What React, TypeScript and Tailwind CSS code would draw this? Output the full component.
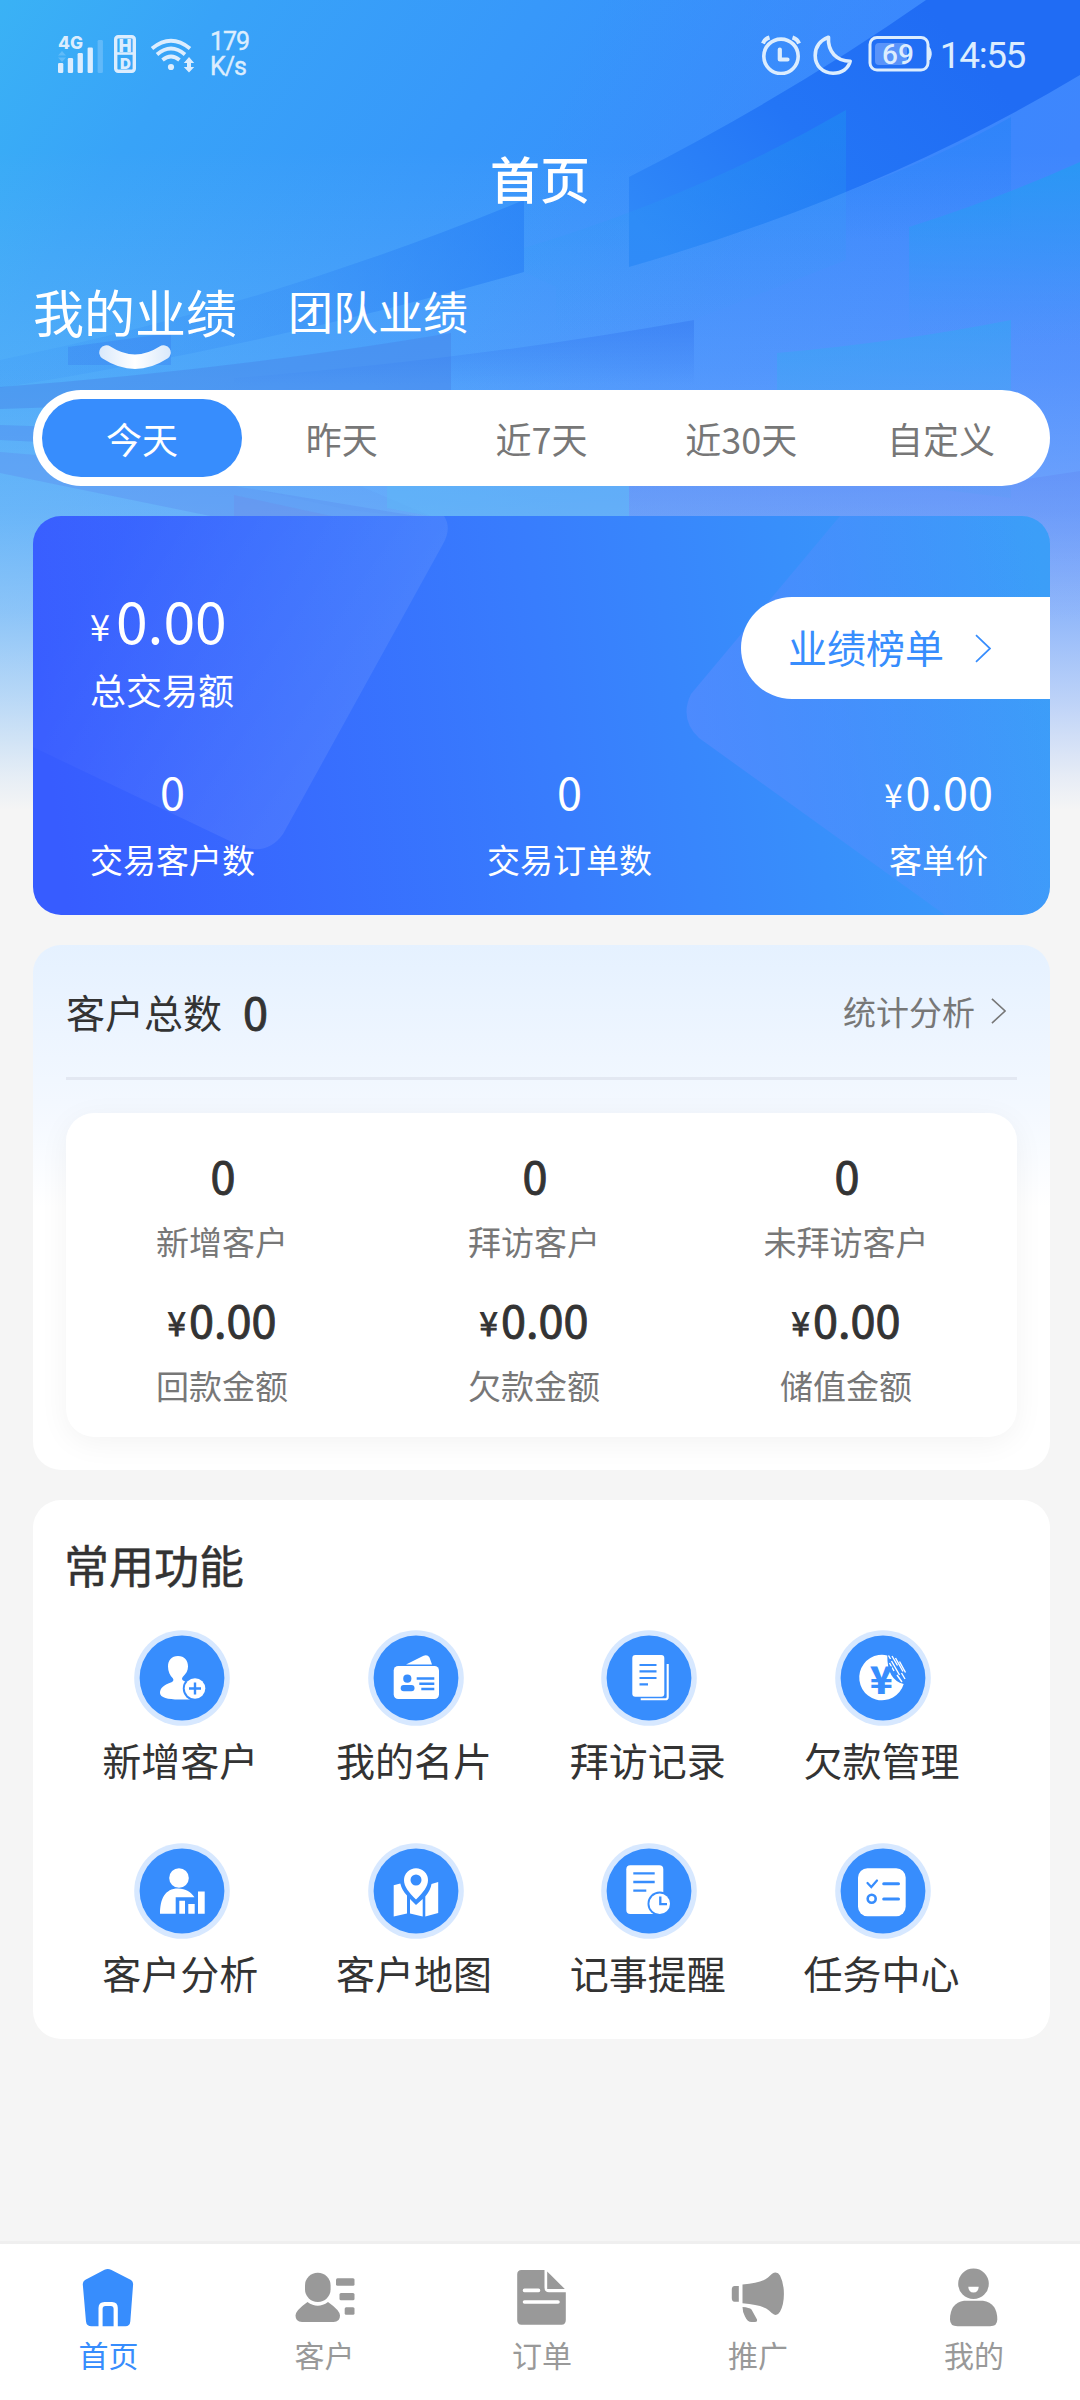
import type { ReactNode } from "react";

const BLUE = "#378dfd";

const ranges = ["今天", "昨天", "近7天", "近30天", "自定义"];

const customerStats = [
  { label: "新增客户", value: "0" },
  { label: "拜访客户", value: "0" },
  { label: "未拜访客户", value: "0" },
  { label: "回款金额", value: "0.00", money: true },
  { label: "欠款金额", value: "0.00", money: true },
  { label: "储值金额", value: "0.00", money: true },
];

const Backdrop = () => (
  <svg className="absolute left-0 top-0" width="1080" height="820" viewBox="0 0 1080 820" fill="none">
    <defs>
      <linearGradient id="sky" x1="0" y1="0" x2="620" y2="420" gradientUnits="userSpaceOnUse">
        <stop offset="0" stopColor="#3ab2f5" />
        <stop offset="0.25" stopColor="#38a3f8" />
        <stop offset="0.6" stopColor="#3798fa" />
        <stop offset="1" stopColor="#368cfc" />
      </linearGradient>
      <linearGradient id="fade" x1="0" y1="150" x2="0" y2="810" gradientUnits="userSpaceOnUse">
        <stop offset="0" stopColor="#f5f5f5" stopOpacity="0" />
        <stop offset="0.33" stopColor="#e8f2fb" stopOpacity="0.13" />
        <stop offset="0.55" stopColor="#f0f5f8" stopOpacity="0.27" />
        <stop offset="0.7" stopColor="#f3f5f6" stopOpacity="0.45" />
        <stop offset="0.84" stopColor="#f5f5f5" stopOpacity="0.7" />
        <stop offset="0.95" stopColor="#f5f5f5" stopOpacity="0.92" />
        <stop offset="1" stopColor="#f5f5f5" />
      </linearGradient>
      <linearGradient id="bandA" x1="950" y1="30" x2="680" y2="270" gradientUnits="userSpaceOnUse">
        <stop offset="0" stopColor="#206cf4" />
        <stop offset="0.5" stopColor="#2375f6" />
        <stop offset="1" stopColor="#2f88f8" />
      </linearGradient>
      <linearGradient id="cyanB" x1="0" y1="110" x2="0" y2="340" gradientUnits="userSpaceOnUse">
        <stop offset="0" stopColor="#1c96f0" stopOpacity="0.42" />
        <stop offset="1" stopColor="#3aa0f6" stopOpacity="0" />
      </linearGradient>
      <linearGradient id="cyanC" x1="0" y1="117" x2="0" y2="240" gradientUnits="userSpaceOnUse">
        <stop offset="0" stopColor="#1a80f4" stopOpacity="0.4" />
        <stop offset="1" stopColor="#1a80f4" stopOpacity="0" />
      </linearGradient>
      <linearGradient id="cyanD" x1="0" y1="165" x2="0" y2="345" gradientUnits="userSpaceOnUse">
        <stop offset="0" stopColor="#249cf2" stopOpacity="0.75" />
        <stop offset="0.5" stopColor="#2c9bf5" stopOpacity="0.42" />
        <stop offset="1" stopColor="#3c97f8" stopOpacity="0" />
      </linearGradient>
      <linearGradient id="cyanE" x1="0" y1="320" x2="0" y2="500" gradientUnits="userSpaceOnUse">
        <stop offset="0" stopColor="#33a5f3" stopOpacity="0.55" />
        <stop offset="1" stopColor="#57a8f6" stopOpacity="0.3" />
      </linearGradient>
      <linearGradient id="bandG" x1="524" y1="200" x2="60" y2="370" gradientUnits="userSpaceOnUse">
        <stop offset="0" stopColor="#2780f6" stopOpacity="0.7" />
        <stop offset="0.5" stopColor="#2c82f4" stopOpacity="0.28" />
        <stop offset="1" stopColor="#2c82f4" stopOpacity="0.12" />
      </linearGradient>
      <linearGradient id="bandJ" x1="0" y1="325" x2="0" y2="385" gradientUnits="userSpaceOnUse">
        <stop offset="0" stopColor="#3578f0" stopOpacity="0.5" />
        <stop offset="1" stopColor="#3578f0" stopOpacity="0" />
      </linearGradient>
      <linearGradient id="violetTint" x1="500" y1="250" x2="1080" y2="480" gradientUnits="userSpaceOnUse">
        <stop offset="0" stopColor="#4a7dff" stopOpacity="0" />
        <stop offset="1" stopColor="#4a7dff" stopOpacity="0.5" />
      </linearGradient>
      <linearGradient id="violet" x1="0" y1="440" x2="0" y2="620" gradientUnits="userSpaceOnUse">
        <stop offset="0" stopColor="#5a86f4" stopOpacity="0.55" />
        <stop offset="1" stopColor="#7f9cf4" stopOpacity="0" />
      </linearGradient>
    </defs>
    <path d="M0 0H1080V820H0Z" fill="url(#sky)" />
    <path d="M0 0H1080V820H0Z" fill="url(#violetTint)" />
    <path d="M0 0H1080V820H0Z" fill="url(#fade)" />
    <path d="M629 177Q790 95 926 0H1080V75Q880 195 629 267Z" fill="url(#bandA)" />
    <path d="M846 110V260L694 320V345H556V287L524 272V248Q700 195 846 110Z" fill="url(#cyanB)" />
    <path d="M1011 117V240H846V192Q940 157 1011 117Z" fill="url(#cyanC)" />
    <path d="M909 227Q1000 198 1080 162V345H909Z" fill="url(#cyanD)" />
    <path d="M777 353Q900 342 1011 320V498L777 470Z" fill="url(#cyanE)" />
    <path d="M524 200Q270 305 0 360V388Q270 345 524 272Z" fill="url(#bandG)" />
    <path d="M68 347L171 333V365H68Z" fill="#3576f0" opacity="0.3" />
    <path d="M0 387Q230 370 451 333V400H0Z" fill="#457fe6" opacity="0.4" />
    <path d="M0 400H60V407L0 409Z" fill="#457fe6" opacity="0.4" />
    <path d="M234 378Q470 360 694 320V392H234Z" fill="url(#bandJ)" />
    <path d="M0 425L60 427V443L0 440Z" fill="#4f88ee" opacity="0.4" />
    <path d="M0 452L60 457L440 520H230L0 473Z" fill="#5c8fef" opacity="0.4" />
    <path d="M240 486H360L440 520L350 510Z" fill="#5c92ef" opacity="0.15" />
    <path d="M234 495L350 520H234Z" fill="#6c8fec" opacity="0.4" />
    <path d="M387 480H629V520H450L387 508Z" fill="#5bbcf6" opacity="0.4" />
    <path d="M629 480H1020L1080 471V620H629Z" fill="url(#violet)" />
  </svg>
);

const StatusBar = () => (
  <div className="relative flex h-[110px] items-start pl-[57px] pr-[55px] pt-[32px] text-[#dcedfe]">
    <svg width="47" height="44" viewBox="0 0 47 44" fill="currentColor">
      <text x="1" y="17" fontSize="17" fontWeight="800" fontFamily="Inter, sans-serif" textLength="25" lengthAdjust="spacingAndGlyphs">4G</text>
      <path d="M5 19l4 4.500H1zM5 30l4-4.500H1z" opacity="0.25" />
      <rect x="1" y="31" width="5.300" height="10" rx="1.300" />
      <rect x="10.800" y="26" width="5.300" height="15" rx="1.300" />
      <rect x="20.600" y="21" width="5.300" height="20" rx="1.300" />
      <rect x="30.600" y="15.500" width="5.300" height="25.500" rx="1.300" />
      <rect x="40.600" y="8" width="5.300" height="33" rx="1.300" opacity="0.25" />
    </svg>
    <svg className="ml-[9px]" width="24" height="44" viewBox="0 0 24 44">
      <rect x="2.700" y="4.700" width="18.600" height="34.600" rx="2.500" fill="none" stroke="currentColor" strokeWidth="3.400" />
      <path d="M3 21.500H21" stroke="currentColor" strokeWidth="2.600" />
      <text x="12" y="19.500" textAnchor="middle" fontSize="17" fontWeight="900" fontFamily="Inter, sans-serif" fill="currentColor">H</text>
      <text x="12.300" y="36.500" textAnchor="middle" fontSize="15" fontWeight="900" fontFamily="Inter, sans-serif" fill="currentColor">D</text>
    </svg>
    <svg className="ml-[13px]" width="46" height="44" viewBox="0 0 46 44" fill="none" stroke="currentColor" strokeWidth="3.800">
      <path d="M2 16.500Q21 1 40 16.500" />
      <path d="M7 22.500Q21 10.500 35 22.500" />
      <path d="M12.500 28Q21 21 29.500 28" />
      <circle cx="21" cy="35" r="3.100" fill="currentColor" stroke="none" />
      <path d="M39 25l5.200 6h-3.200v4h3.200l-5.200 5.600-5.200-5.600h3.200v-4h-3.200z" fill="currentColor" stroke="none" />
    </svg>
    <div className="ml-[14px] mt-[-3px] w-[44px] font-['Roboto',sans-serif] text-[25px] leading-[25px] tracking-[-1px] [-webkit-text-stroke:0.4px]">
      179 K/s
    </div>
    <svg className="ml-auto mt-[3px]" width="40" height="40" viewBox="0 0 40 40" fill="none" stroke="currentColor">
      <circle cx="20" cy="21.300" r="17.200" strokeWidth="3.600" />
      <path d="M18.800 14.500V24.500H26.500" strokeWidth="4.200" strokeLinejoin="round" strokeLinecap="round" />
      <path d="M2 8.500Q3.500 4 8.500 2.500M38 8.500Q36.500 4 31.500 2.500" strokeWidth="4" />
    </svg>
    <svg className="ml-[12px] mt-[2px]" width="40" height="42" viewBox="0 0 40 42" fill="none" stroke="currentColor" strokeWidth="3.600" strokeLinejoin="round">
      <path d="M15.500 3.200C6 7 2.200 13.500 2.200 21.500C2.200 32 10 39.200 20 39.200C29 39.200 35.500 34.500 37.200 27.200C24 27 14.500 18 15.500 3.200Z" />
    </svg>
    <svg className="ml-[15px] mt-[3px]" width="66" height="38" viewBox="0 0 66 38">
      <rect x="7" y="8" width="32" height="22" rx="4" fill="#6ea0fb" opacity="0.75" />
      <rect x="2" y="2.500" width="58" height="32.500" rx="7" fill="none" stroke="currentColor" strokeWidth="3" />
      <path d="M61.500 12.500q3.500 6.200 0 12.500z" fill="currentColor" stroke="currentColor" strokeWidth="1" />
      <text x="30" y="29" textAnchor="middle" fontSize="28" fontWeight="500" fontFamily="Roboto, sans-serif" fill="currentColor">69</text>
    </svg>
    <div className="ml-[6px] mt-[2px] font-['Roboto',sans-serif] text-[37px] leading-[44px] tracking-[-1.4px]">14:55</div>
  </div>
);

const Chevron = ({ w, h, color }: { w: number; h: number; color: string }) => (
  <svg width={w} height={h} viewBox="0 0 16 28" fill="none" stroke={color} strokeWidth="1.700" preserveAspectRatio="none">
    <path d="M1 1L15 14L1 27" />
  </svg>
);

const Money = ({ value, money, className }: { value: string; money?: boolean; className?: string }) => (
  <div className={`flex h-[56px] items-baseline justify-center text-[45px] leading-[56px] ${className ?? ""}`}>
    {money && <span className="relative top-[-2px] mr-[3px] text-[33px] leading-none">¥</span>}
    {value}
  </div>
);

const SummaryCard = () => (
  <section className="relative mx-[33px] mr-[30px] mt-[30px] h-[399px] overflow-hidden rounded-[28px] text-white">
    <svg className="absolute left-0 top-0" width="1017" height="399" viewBox="0 0 1017 399">
      <defs>
        <linearGradient id="card" x1="0" y1="130" x2="1000" y2="0" gradientUnits="userSpaceOnUse">
          <stop offset="0" stopColor="#375cff" />
          <stop offset="0.5" stopColor="#387dfd" />
          <stop offset="0.75" stopColor="#388ffb" />
          <stop offset="1" stopColor="#3a9ff8" />
        </linearGradient>
        <linearGradient id="leftTile" x1="60" y1="60" x2="330" y2="230" gradientUnits="userSpaceOnUse">
          <stop offset="0" stopColor="#fff" stopOpacity="0.01" />
          <stop offset="1" stopColor="#fff" stopOpacity="0.09" />
        </linearGradient>
        <linearGradient id="rightTile" x1="660" y1="200" x2="1017" y2="120" gradientUnits="userSpaceOnUse">
          <stop offset="0" stopColor="#5a8dff" stopOpacity="0.6" />
          <stop offset="1" stopColor="#5a8dff" stopOpacity="0.05" />
        </linearGradient>
      </defs>
      <path d="M0 0H1017V399H0Z" fill="url(#card)" />
      <path d="M0 231L203 328Q233 342 250 318L410 28Q419 12 411 0H0Z" fill="url(#leftTile)" />
      <path d="M807 0L658 178Q646 203 666 222L912 399H1017V0Z" fill="url(#rightTile)" />
    </svg>
    <div className="relative flex justify-between pl-[57px] pt-[68px]">
      <div>
        <div className="flex h-[70px] items-baseline text-[57px] leading-[70px]">
          <span className="relative top-[-3px] mr-[6px] text-[36px] leading-none">¥</span>0.00
        </div>
        <div className="mt-[10px] text-[36px] leading-[50px]">总交易额</div>
      </div>
      <button className="mt-[13px] flex h-[102px] w-[309px] items-center rounded-l-full bg-white pl-[47px] text-[39px] leading-[50px] text-[#378dfd]">
        <span className="relative top-[-2px] mr-[31px]">业绩榜单</span>
        <Chevron w={16} h={29} color={BLUE} />
      </button>
    </div>
    <div className="relative mt-[49px] flex justify-between px-[57px] text-center">
      <div>
        <Money value="0" />
        <div className="mt-[20px] text-[33px] leading-[40px]">交易客户数</div>
      </div>
      <div>
        <Money value="0" />
        <div className="mt-[20px] text-[33px] leading-[40px]">交易订单数</div>
      </div>
      <div>
        <Money value="0.00" money />
        <div className="mt-[20px] text-[33px] leading-[40px]">客单价</div>
      </div>
    </div>
  </section>
);

const CustomerCard = () => (
  <section className="relative mx-[33px] mr-[30px] mt-[30px] h-[525px] rounded-[28px] bg-linear-to-b from-[#e5f1ff] from-0% via-[#f3f8ff] via-30% to-white to-50% px-[33px]">
    <div className="flex h-[131px] items-center pr-[11px] text-[#333]">
      <h2 className="text-[39px] leading-[50px]">客户总数</h2>
      <span className="ml-[21px] text-[45px] leading-[50px] [-webkit-text-stroke:0.9px_#333]">0</span>
      <span className="ml-auto mr-[16px] text-[33px] leading-[50px] text-[#777]">统计分析</span>
      <Chevron w={15} h={26} color="#777" />
    </div>
    <div className="mt-[1px] h-[3px] bg-[#e3e8f2]" />
    <div className="mt-[33px] grid h-[324px] grid-cols-3 content-start gap-y-[30px] rounded-[28px] bg-white pl-[1px] pr-[14px] pt-[34px] text-center shadow-[0_6px_30px_rgba(0,0,0,0.05)]">
      {customerStats.map((s) => (
        <div key={s.label}>
          <Money value={s.value} money={s.money} className={`text-[#333] [-webkit-text-stroke:0.9px_#333] ${s.money ? "pr-[2px]" : ""}`} />
          <div className="mt-[18px] pr-[2px] text-[33px] leading-[40px] text-[#777]">{s.label}</div>
        </div>
      ))}
    </div>
  </section>
);

const features: { label: string; icon: ReactNode }[] = [
  {
    label: "新增客户",
    icon: (
      <>
        <path d="M44 26c-6.500 0-10 4.500-10 10.500 0 5 2 9 4.800 11.800 1.200 1.700.6 3.200-1.300 4C30 55 26 58 26 63c0 4.500 8 6.500 19 6.500h12V54l-7-3c-2-.8-2.600-2.200-1.300-4C52 43.500 54 41 54 36.500 54 30.500 50.500 26 44 26Z" />
        <circle cx="61" cy="58.500" r="12.200" fill={BLUE} />
        <circle cx="61" cy="58.500" r="10.300" />
        <path d="M61 52.500V64.500M55 58.500H67" stroke={BLUE} strokeWidth="2.400" />
      </>
    ),
  },
  {
    label: "我的名片",
    icon: (
      <>
        <path d="M38 34.500L53 27Q59 23.500 61.500 27.500L64 34.500Z" />
        <rect x="25.700" y="36" width="45.300" height="33" rx="4.500" />
        <g fill={BLUE}>
          <circle cx="39.300" cy="48.700" r="4.100" />
          <rect x="32.700" y="55" width="13.800" height="6.200" rx="3" />
        </g>
        <path d="M48.700 48.500H66.300M51.300 53.800H66.300M53.300 59H66.300" stroke={BLUE} strokeWidth="2.400" />
      </>
    ),
  },
  {
    label: "拜访记录",
    icon: (
      <>
        <rect x="31.300" y="25" width="32" height="41.700" rx="3" />
        <path d="M66.700 34V67q0 2.300-2.300 2.300H39.700" fill="none" stroke="#fff" strokeWidth="2.100" />
        <path d="M38.500 35H55.500M38.500 41.400H55.500M38.500 48H55.500M38.500 54.400H47" stroke={BLUE} strokeWidth="2.200" />
      </>
    ),
  },
  {
    label: "欠款管理",
    icon: (
      <>
        <path d="M52.300 25.500A22.700 22.700 0 1 0 68.700 54Q52 50 52.300 25.500Z" />
        <path
          d="M53.500 25.500L55.500 29M57 26L62.500 35.500M54.500 33L59 41M60.500 28L68 41.500M56.500 31L64.500 45M64.500 31.500L70.500 42.500M62 45L67 52M66.500 43L70 49"
          stroke="#fff"
          strokeWidth="1.400"
        />
        <text x="46.300" y="63.800" textAnchor="middle" fontSize="38" fontWeight="900" fontFamily="Noto Sans CJK SC, sans-serif" fill={BLUE}>
          ¥
        </text>
      </>
    ),
  },
  {
    label: "客户分析",
    icon: (
      <>
        <circle cx="45" cy="35" r="9.800" />
        <path d="M26 70.700C26 56 31 45.500 44 45.500C52 45.500 57 49 60.500 54.300H41.700V70.700Z" />
        <path d="M45.300 57.700H51V70.700H45.300ZM54.300 61H60.700V70.700H54.300ZM64 48.500H70.700V70.700H64Z" />
      </>
    ),
  },
  {
    label: "客户地图",
    icon: (
      <>
        <path fillRule="evenodd" d="M48 56.500C41 49.500 36 43.500 36 37.200a12 12 0 0 1 24 0C60 43.500 55 49.500 48 56.500ZM48 31.500a5.500 5.500 0 1 0 0 11 5.500 5.500 0 0 0 0-11Z" />
        <path d="M25.700 42.300L32.300 40.500Q34 47.500 39 52.500V70.500L25.700 73.500Z" />
        <path d="M42 56L48 62L54.700 56V73.500L42 70.500Z" />
        <path d="M57.300 53.500Q62.500 47.500 63.500 41L70.200 39V70L57.300 73.500Z" />
      </>
    ),
  },
  {
    label: "记事提醒",
    icon: (
      <>
        <rect x="25.300" y="22.300" width="37" height="48.700" rx="4" />
        <path d="M32.300 30.400H53.700M32.300 39H53.700M32.300 47.700H45.300" stroke={BLUE} strokeWidth="2.300" />
        <circle cx="58.700" cy="60.700" r="12.200" fill={BLUE} />
        <circle cx="58.700" cy="60.700" r="10.300" />
        <path d="M59.300 53.500V61.200H66" fill="none" stroke={BLUE} strokeWidth="2.300" />
      </>
    ),
  },
  {
    label: "任务中心",
    icon: (
      <>
        <rect x="23" y="25.300" width="47.700" height="48" rx="9.500" />
        <g fill="none" stroke={BLUE} strokeWidth="2.600" strokeLinecap="round">
          <path d="M32.500 40L36.300 44L42 37.500" strokeWidth="2.200" />
          <circle cx="36.700" cy="55.700" r="4" />
          <path d="M48.700 40.700H63.500M48.700 56H63.500" strokeWidth="3" />
        </g>
      </>
    ),
  },
];

const FeatureCard = () => (
  <section className="relative mx-[33px] mr-[30px] mt-[30px] h-[539px] rounded-[28px] bg-white pl-[32px] pr-[50px] pt-[35px] text-[#333]">
    <h2 className="ml-[-1px] text-[45px] leading-[60px] [-webkit-text-stroke:0.4px_#333]">常用功能</h2>
    <div className="mt-[35px] grid grid-cols-4 gap-y-[59px]">
      {features.map((f) => (
        <div key={f.label} className="flex flex-col items-center">
          <svg width="96" height="96" viewBox="0 0 96 96" fill="#fff">
            <circle cx="48" cy="48" r="47.800" fill="#d7e8ff" />
            <circle cx="48" cy="48" r="42.400" fill={BLUE} />
            {f.icon}
          </svg>
          <span className="mt-[8px] pr-[3px] text-[39px] leading-[50px]">{f.label}</span>
        </div>
      ))}
    </div>
  </section>
);

const navItems: { label: string; icon: ReactNode }[] = [
  {
    label: "首页",
    icon: (
      <>
        <path d="M26.500 2.800Q29.800 1 33 2.800L53 13Q55.300 14.500 55.100 17.500L52.300 54.500Q51.800 59.300 47.500 59.300H39.800V41Q39.800 35 34 35H26.500Q20.500 35 20.500 41V59.300H13.500Q8.500 59.300 8 54.500L4.800 17.500Q4.600 14.500 7 13Z" />
        <path d="M24.600 59.300V42Q24.600 39 27.500 39H32.800Q35.600 39 35.600 42V59.300Z" />
      </>
    ),
  },
  {
    label: "客户",
    icon: (
      <>
        <rect x="11" y="5.700" width="25.600" height="29.300" rx="12.700" />
        <path d="M13.500 35Q23.700 42.500 34 35Q46 43.500 46 48.500Q46 55 39.500 55H8Q1.500 55 1.500 48.500Q1.500 43.500 13.500 35Z" />
        <rect x="42" y="11.300" width="18.500" height="7.400" rx="1.500" />
        <rect x="45.500" y="26" width="15" height="7.200" rx="1.500" />
        <rect x="50.700" y="40.300" width="9.800" height="7.400" rx="1.500" />
      </>
    ),
  },
  {
    label: "订单",
    icon: (
      <>
        <path d="M11.500 3H34.500V20.500Q34.500 25.200 39 25.200H55.800V53Q55.800 57.700 51.500 57.700H11.500Q7.200 57.700 7.200 53V7.500Q7.200 3 11.500 3Z" />
        <path d="M37.200 4.500L54.800 22H37.200Z" />
        <path d="M14.500 23.400H28.500M14.500 35H48" stroke="#fff" strokeWidth="3.600" strokeLinecap="round" />
      </>
    ),
  },
  {
    label: "推广",
    icon: (
      <>
        <path d="M12.800 19V34.700H8.500Q5.800 34.700 5.800 31V22.500Q5.800 19 8.500 19Z" />
        <path d="M16.500 17.500Q36 16 42 10.500Q46 6.500 48 5.700Q52 4.700 54 8.500Q57.900 16 57.900 27Q57.900 38 54 44.700Q51.500 49 48 47.500Q46 46.500 43 43.500Q38 38.200 16.500 36.300Z" />
        <path d="M16.500 40Q23.500 40.500 25.500 42.500L31 52.500Q31.500 55 29 55H25.500Q21.500 55 19 49.500Q16.500 45 16.500 40Z" />
      </>
    ),
  },
  {
    label: "我的",
    icon: (
      <>
        <circle cx="31.500" cy="16.800" r="15.300" />
        <path d="M26.300 19.700H36.700Q36.500 25.500 31.500 25.500Q26.500 25.500 26.300 19.700Z" fill="#fff" />
        <path d="M22 33.700H41Q55.300 36 55.300 52.500Q55.300 59.300 48 59.300H15.500Q8 59.300 8 52.500Q8 36 22 33.700Z" />
      </>
    ),
  },
];

const BottomNav = () => (
  <nav className="relative mt-auto grid h-[159px] grid-cols-5 border-t-[3px] border-[#efefef] bg-white">
    {navItems.map((item, i) => (
      <div key={item.label} className={`flex flex-col items-center pt-[23px] ${i === 0 ? "text-[#378dfd]" : "text-[#999]"}`}>
        <svg width="60" height="60" viewBox="0 0 60 60" fill="currentColor" overflow="visible">
          {item.icon}
        </svg>
        <span className={`mt-[7px] text-[30px] leading-[40px] ${i > 1 ? "pl-[4px]" : "pl-[1px]"}`}>{item.label}</span>
      </div>
    ))}
  </nav>
);

export default function App() {
  return (
    <main className="relative flex h-[2400px] w-[1080px] flex-col overflow-hidden bg-[#f5f5f5] font-['Noto_Sans_CJK_SC',sans-serif]">
      <Backdrop />
      <StatusBar />
      <h1 className="relative flex h-[134px] items-center justify-center text-[50px] font-medium leading-[60px] text-white">首页</h1>

      <div className="relative flex h-[146px] items-start gap-[51px] pl-[33px] pt-[32px] leading-[70px] text-white">
        <div className="relative text-[51px]">
          我的业绩
          <svg className="absolute left-[65px] top-[68px]" width="74" height="26" viewBox="0 0 74 26" fill="none">
            <defs>
              <linearGradient id="smile" x1="0" y1="0" x2="74" y2="0" gradientUnits="userSpaceOnUse">
                <stop offset="0" stopColor="#d8e8fb" />
                <stop offset="0.5" stopColor="#fff" />
                <stop offset="1" stopColor="#d8e8fb" />
              </linearGradient>
            </defs>
            <path d="M8.500 8.500Q37 27 65.500 8.500" stroke="url(#smile)" strokeWidth="14.500" strokeLinecap="round" />
          </svg>
        </div>
        <div className="text-[45px]">团队业绩</div>
      </div>

      <div className="relative ml-[33px] mr-[30px] grid h-[96px] grid-cols-5 rounded-full bg-white p-[9px] text-[36px] text-[#777]">
        {ranges.map((r, i) => (
          <div key={r} className={`flex items-center justify-center rounded-full pb-[1px] leading-[50px] ${i === 0 ? "bg-[#378dfd] text-white" : ""}`}>
            {r}
          </div>
        ))}
      </div>

      <SummaryCard />
      <CustomerCard />
      <FeatureCard />
      <BottomNav />
    </main>
  );
}
